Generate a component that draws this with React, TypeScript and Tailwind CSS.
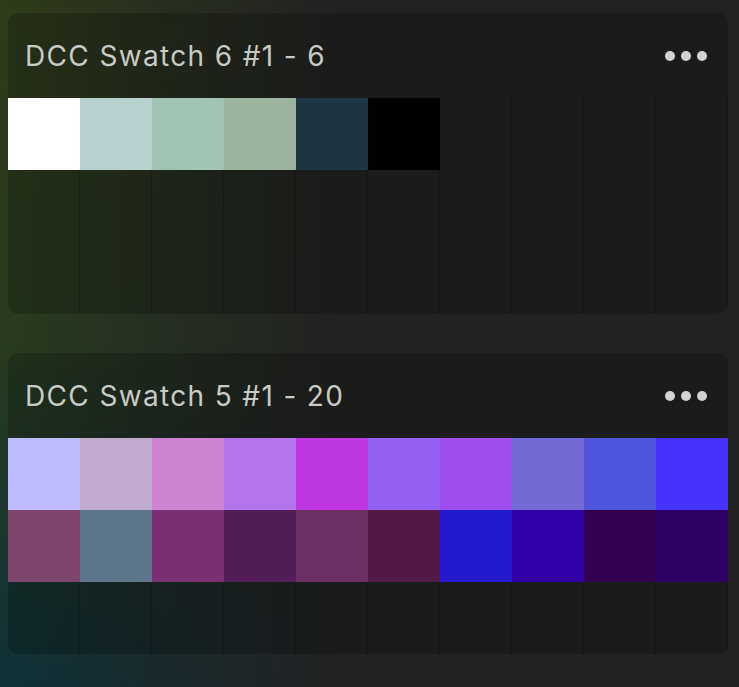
const cards = [
  {
    title: "DCC Swatch 6 #1 - 6",
    colors: ["#ffffff", "#b8d1cf", "#a1c4b4", "#9db39f", "#1f3542", "#000000"],
  },
  {
    title: "DCC Swatch 5 #1 - 20",
    colors: [
      "#bdbbfd", "#c0abcd", "#cc83cf", "#b473e8", "#bf37e0",
      "#9261f1", "#a04ded", "#736ad6", "#5054dc", "#4632fb",
      "#7d4569", "#5f7589", "#7b3076", "#521e58", "#6b2f62",
      "#541a46", "#2419ce", "#3001a6", "#32004f", "#2b0062",
    ],
  },
];

function SwatchCard({ title, colors }: { title: string; colors: string[] }) {
  const cells = Array.from({ length: 30 }, (_, i) => colors[i]);

  return (
    <div className="w-[720px] rounded-[10px] bg-black/20 overflow-hidden">
      {/* Header */}
      <div className="h-[85px] flex items-center justify-between pl-[17px] pr-[21px]">
        <span className="text-[28px] leading-none text-[#c8cac5] tracking-[1.35px]">{title}</span>
        <div className="flex gap-[6px]">
          <span className="w-[10px] h-[10px] rounded-full bg-[#d2d2d2]" />
          <span className="w-[10px] h-[10px] rounded-full bg-[#d2d2d2]" />
          <span className="w-[10px] h-[10px] rounded-full bg-[#d2d2d2]" />
        </div>
      </div>

      {/* Swatch grid */}
      <div className="grid grid-cols-10">
        {cells.map((c, i) =>
          c ? (
            <div key={i} className="h-[72px]" style={{ backgroundColor: c }} />
          ) : (
            <div key={i} className="h-[72px] border-r border-black/20" />
          )
        )}
      </div>
    </div>
  );
}

export default function App() {
  return (
    <div
      className="min-h-[687px] w-full bg-[#222222] bg-[image:linear-gradient(to_right,rgba(34,34,34,0)_0%,rgba(34,34,34,0.55)_22%,#222222_45%),linear-gradient(to_bottom,#303c1b_0%,#293c20_50%,#0e3138_100%)] px-2 pt-[13px] pb-8 flex flex-col gap-[39px]"
      style={{ fontFamily: "Inter, 'Noto Sans', sans-serif" }}
    >
      {cards.map((c) => (
        <SwatchCard key={c.title} title={c.title} colors={c.colors} />
      ))}
    </div>
  );
}
